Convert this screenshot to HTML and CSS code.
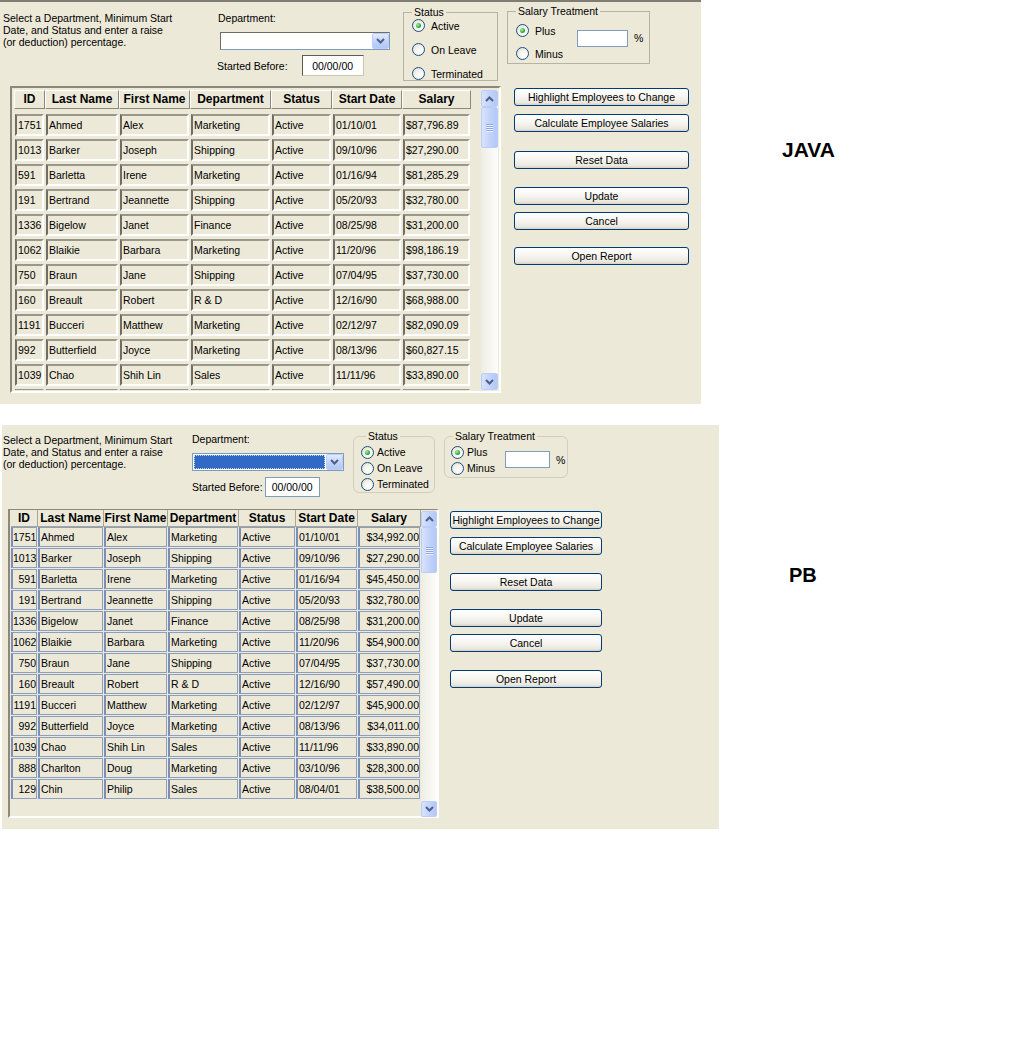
FILE: index.html
```html
<!DOCTYPE html>
<html>
<head>
<meta charset="utf-8">
<title>Employee Salaries</title>
<link rel="stylesheet" href="styles.css">
</head>
<body>
<div class="page">
  <div class="row java-row">
    <section class="panel jpanel">
      <div class="top">
        <p class="desc">Select a Department, Minimum Start<br>Date, and Status and enter a raise<br>(or deduction) percentage.</p>
        <div class="dept">
          <div class="lbl">Department:</div>
          <div class="combo"><div class="cfield"></div><div class="ddbtn"><svg width="9" height="6" viewBox="0 0 9 6"><path d="M1 1L4.5 4.5L8 1" fill="none" stroke="#4d6185" stroke-width="2"/></svg></div></div>
          <div class="started"><span>Started Before:</span><div class="tinput">00/00/00</div></div>
        </div>
        <fieldset class="grp status">
          <legend>Status</legend>
          <div class="opt"><span class="rb on"></span>Active</div>
          <div class="opt"><span class="rb"></span>On Leave</div>
          <div class="opt"><span class="rb"></span>Terminated</div>
        </fieldset>
        <fieldset class="grp salary">
          <legend>Salary Treatment</legend>
          <div class="sal">
            <div class="opts">
              <div class="opt"><span class="rb on"></span>Plus</div>
              <div class="opt"><span class="rb"></span>Minus</div>
            </div>
            <div class="pct"></div><span class="pctsign">%</span>
          </div>
        </fieldset>
      </div>
      <div class="bottom">
        <div class="tbl">
          <div class="data">
            <div class="thead">
              <div>ID</div><div>Last Name</div><div>First Name</div><div>Department</div><div>Status</div><div>Start Date</div><div>Salary</div>
            </div>
            <div class="tbody">
              <div>1751</div><div>Ahmed</div><div>Alex</div><div>Marketing</div><div>Active</div><div>01/10/01</div><div>$87,796.89</div>
              <div>1013</div><div>Barker</div><div>Joseph</div><div>Shipping</div><div>Active</div><div>09/10/96</div><div>$27,290.00</div>
              <div>591</div><div>Barletta</div><div>Irene</div><div>Marketing</div><div>Active</div><div>01/16/94</div><div>$81,285.29</div>
              <div>191</div><div>Bertrand</div><div>Jeannette</div><div>Shipping</div><div>Active</div><div>05/20/93</div><div>$32,780.00</div>
              <div>1336</div><div>Bigelow</div><div>Janet</div><div>Finance</div><div>Active</div><div>08/25/98</div><div>$31,200.00</div>
              <div>1062</div><div>Blaikie</div><div>Barbara</div><div>Marketing</div><div>Active</div><div>11/20/96</div><div>$98,186.19</div>
              <div>750</div><div>Braun</div><div>Jane</div><div>Shipping</div><div>Active</div><div>07/04/95</div><div>$37,730.00</div>
              <div>160</div><div>Breault</div><div>Robert</div><div>R &amp; D</div><div>Active</div><div>12/16/90</div><div>$68,988.00</div>
              <div>1191</div><div>Bucceri</div><div>Matthew</div><div>Marketing</div><div>Active</div><div>02/12/97</div><div>$82,090.09</div>
              <div>992</div><div>Butterfield</div><div>Joyce</div><div>Marketing</div><div>Active</div><div>08/13/96</div><div>$60,827.15</div>
              <div>1039</div><div>Chao</div><div>Shih Lin</div><div>Sales</div><div>Active</div><div>11/11/96</div><div>$33,890.00</div>
              <div></div><div></div><div></div><div></div><div></div><div></div><div></div>
            </div>
          </div>
          <div class="sbar">
            <div class="sbtn"><svg width="9" height="6" viewBox="0 0 9 6"><path d="M1 5L4.5 1.5L8 5" fill="none" stroke="#4d6185" stroke-width="2"/></svg></div>
            <div class="thumb"><span></span><span></span><span></span><span></span></div>
            <div class="track"></div>
            <div class="sbtn"><svg width="9" height="6" viewBox="0 0 9 6"><path d="M1 1L4.5 4.5L8 1" fill="none" stroke="#4d6185" stroke-width="2"/></svg></div>
          </div>
        </div>
        <div class="btns">
          <button class="btn">Highlight Employees to Change</button>
          <button class="btn">Calculate Employee Salaries</button>
          <button class="btn g1">Reset Data</button>
          <button class="btn g2">Update</button>
          <button class="btn g4">Cancel</button>
          <button class="btn g3">Open Report</button>
        </div>
      </div>
    </section>
    <div class="tag">JAVA</div>
  </div>

  <div class="row pb-row">
    <section class="panel ppanel">
      <div class="top">
        <p class="desc">Select a Department, Minimum Start<br>Date, and Status and enter a raise<br>(or deduction) percentage.</p>
        <div class="dept">
          <div class="lbl">Department:</div>
          <div class="combo"><div class="cfield"><div class="sel"></div></div><div class="ddbtn"><svg width="9" height="6" viewBox="0 0 9 6"><path d="M1 1L4.5 4.5L8 1" fill="none" stroke="#4d6185" stroke-width="2"/></svg></div></div>
          <div class="started"><span>Started Before:</span><div class="tinput">00/00/00</div></div>
        </div>
        <fieldset class="grp status">
          <legend>Status</legend>
          <div class="opt"><span class="rb on"></span>Active</div>
          <div class="opt"><span class="rb"></span>On Leave</div>
          <div class="opt"><span class="rb"></span>Terminated</div>
        </fieldset>
        <fieldset class="grp salary">
          <legend>Salary Treatment</legend>
          <div class="sal">
            <div class="opts">
              <div class="opt"><span class="rb on"></span>Plus</div>
              <div class="opt"><span class="rb"></span>Minus</div>
            </div>
            <div class="pct"></div><span class="pctsign">%</span>
          </div>
        </fieldset>
      </div>
      <div class="bottom">
        <div class="tbl">
          <div class="data">
            <div class="thead">
              <div>ID</div><div>Last Name</div><div>First Name</div><div>Department</div><div>Status</div><div>Start Date</div><div>Salary</div>
            </div>
            <div class="tbody">
              <div class="r">1751</div><div>Ahmed</div><div>Alex</div><div>Marketing</div><div>Active</div><div>01/10/01</div><div class="r">$34,992.00</div>
              <div class="r">1013</div><div>Barker</div><div>Joseph</div><div>Shipping</div><div>Active</div><div>09/10/96</div><div class="r">$27,290.00</div>
              <div class="r">591</div><div>Barletta</div><div>Irene</div><div>Marketing</div><div>Active</div><div>01/16/94</div><div class="r">$45,450.00</div>
              <div class="r">191</div><div>Bertrand</div><div>Jeannette</div><div>Shipping</div><div>Active</div><div>05/20/93</div><div class="r">$32,780.00</div>
              <div class="r">1336</div><div>Bigelow</div><div>Janet</div><div>Finance</div><div>Active</div><div>08/25/98</div><div class="r">$31,200.00</div>
              <div class="r">1062</div><div>Blaikie</div><div>Barbara</div><div>Marketing</div><div>Active</div><div>11/20/96</div><div class="r">$54,900.00</div>
              <div class="r">750</div><div>Braun</div><div>Jane</div><div>Shipping</div><div>Active</div><div>07/04/95</div><div class="r">$37,730.00</div>
              <div class="r">160</div><div>Breault</div><div>Robert</div><div>R &amp; D</div><div>Active</div><div>12/16/90</div><div class="r">$57,490.00</div>
              <div class="r">1191</div><div>Bucceri</div><div>Matthew</div><div>Marketing</div><div>Active</div><div>02/12/97</div><div class="r">$45,900.00</div>
              <div class="r">992</div><div>Butterfield</div><div>Joyce</div><div>Marketing</div><div>Active</div><div>08/13/96</div><div class="r">$34,011.00</div>
              <div class="r">1039</div><div>Chao</div><div>Shih Lin</div><div>Sales</div><div>Active</div><div>11/11/96</div><div class="r">$33,890.00</div>
              <div class="r">888</div><div>Charlton</div><div>Doug</div><div>Marketing</div><div>Active</div><div>03/10/96</div><div class="r">$28,300.00</div>
              <div class="r">129</div><div>Chin</div><div>Philip</div><div>Sales</div><div>Active</div><div>08/04/01</div><div class="r">$38,500.00</div>
            </div>
          </div>
          <div class="sbar">
            <div class="sbtn"><svg width="9" height="6" viewBox="0 0 9 6"><path d="M1 5L4.5 1.5L8 5" fill="none" stroke="#4d6185" stroke-width="2"/></svg></div>
            <div class="thumb"><span></span><span></span><span></span><span></span></div>
            <div class="track"></div>
            <div class="sbtn"><svg width="9" height="6" viewBox="0 0 9 6"><path d="M1 1L4.5 4.5L8 1" fill="none" stroke="#4d6185" stroke-width="2"/></svg></div>
          </div>
        </div>
        <div class="btns">
          <button class="btn">Highlight Employees to Change</button>
          <button class="btn">Calculate Employee Salaries</button>
          <button class="btn g2">Reset Data</button>
          <button class="btn g2">Update</button>
          <button class="btn g4">Cancel</button>
          <button class="btn g2">Open Report</button>
        </div>
      </div>
    </section>
    <div class="tag">PB</div>
  </div>
</div>
</body>
</html>
```

FILE: styles.css
```css
* { box-sizing: border-box; }

body {
  margin: 0;
  background: #ffffff;
  font-family: "Liberation Sans", Arial, sans-serif;
  font-size: 10.5px;
  color: #000;
}

.page { display: flex; flex-direction: column; gap: 21px; }
.row { display: flex; align-items: flex-start; }

.panel {
  background: #ece9d8;
  height: 404px;
  display: flex;
  flex-direction: column;
}
.jpanel { width: 701px; border-top: 2px solid #7f7d72; }
.ppanel { width: 717px; margin-left: 2px; }

.tag { font-weight: bold; font-size: 20px; line-height: 20px; }
.java-row .tag { font-size: 21px; margin: 140px 0 0 81px; }
.pb-row .tag { margin: 140px 0 0 70px; }

/* ---------- top form area ---------- */
.top { height: 84px; display: flex; align-items: flex-start; }

.desc { margin: 0; font-size: 10.5px; line-height: 12px; }
.jpanel .desc { margin: 10px 0 0 3px; width: 214px; }
.ppanel .desc { margin: 9px 0 0 1px; width: 188px; }

.dept { display: flex; flex-direction: column; align-items: flex-start; }
.jpanel .dept { width: 186px; margin-top: 10px; }
.ppanel .dept { width: 162px; margin-top: 8px; }
.lbl { line-height: 13px; padding-left: 1px; }

.combo { display: flex; height: 18px; background: #fff; }
.jpanel .combo {
  width: 170px; margin: 7px 0 0 3px;
  border: 1px solid #7f9db9; border-top-color: #6f6d62; border-left-color: #6f6d62;
}
.ppanel .combo { width: 152px; margin: 7px 0 0 1px; border: 1px solid #7f9db9; }
.cfield { flex: 1; padding: 1px; }
.sel { height: 100%; background: #316ac5; outline: 1px dotted #c8d4ee; outline-offset: -1px; }
.ddbtn {
  width: 17px; height: 16px;
  border: 1px solid #bccdf8; border-radius: 2px;
  background: linear-gradient(#e3ebfd, #c0d1f9 60%, #b1c7f6);
  display: flex; align-items: center; justify-content: center;
}

.started { display: flex; align-items: center; }
.jpanel .started { margin-top: 5px; }
.ppanel .started { margin-top: 6px; padding-left: 1px; }
.tinput {
  background: #fff; border: 1px solid #7f9db9;
  display: flex; align-items: center; justify-content: center;
}
.jpanel .tinput { width: 62px; height: 21px; margin-left: 14px; border-color: #5d5b52 #c9c6b8 #c9c6b8 #5d5b52; }
.ppanel .tinput { width: 55px; height: 20px; margin-left: 2px; }

/* group boxes */
fieldset.grp { margin: 0; padding: 0; min-width: 0; border: 1px solid #c5c2b2; }
fieldset.grp legend { padding: 0 2px; line-height: 13px; }
.opt { display: flex; align-items: center; height: 13px; }
.rb {
  width: 13px; height: 13px; border-radius: 50%;
  border: 1px solid #1c5180;
  background: radial-gradient(circle at 65% 65%, #ffffff 0, #f4f3ee 45%, #d9d6ca 100%);
  position: relative; flex: none;
}
.rb.on::after {
  content: ""; position: absolute; left: 3px; top: 3px;
  width: 5px; height: 5px; border-radius: 50%;
  background: radial-gradient(circle at 35% 35%, #a4f0a4, #21a121 70%);
}

.jpanel .status { width: 95px; margin-top: 4px; padding: 0 0 0 8px; border-color: #b6b3a5; }
.jpanel .status .opt { gap: 6px; margin-bottom: 11px; }
.jpanel .status .opt:last-child { margin-bottom: 0; }
.jpanel .salary { width: 143px; margin: 3px 0 0 9px; padding: 6px 0 3px 8px; border-color: #b6b3a5; }
.jpanel .salary .opts { width: 61px; }
.jpanel .salary .opt { gap: 6px; }
.jpanel .salary .opt + .opt { margin-top: 10px; }
.sal { display: flex; align-items: flex-start; }
.pct { background: #fff; border: 1px solid #7f9db9; }
.jpanel .pct { width: 51px; height: 17px; margin-top: 6px; }
.pctsign { margin-left: 6px; }
.jpanel .pctsign { margin-top: 8px; }

.ppanel .grp { border-color: #d0d0bf; border-radius: 6px; }
.ppanel .status { width: 82px; margin: 5px 0 0 0; padding: 1px 0 0 7px; }
.ppanel .status legend { margin-left: 5px; }
.ppanel .opt { height: 16px; gap: 3px; }
.ppanel .salary { width: 124px; margin: 5px 0 0 9px; padding: 1px 0 1px 6px; }
.ppanel .salary legend { margin-left: 2px; }
.ppanel .salary .opts { width: 54px; }
.ppanel .pct { width: 45px; height: 17px; margin-top: 7px; }
.ppanel .pctsign { margin-top: 10px; }

/* ---------- bottom area ---------- */
.bottom { display: flex; align-items: flex-start; }

.tbl { display: flex; background: #ece9d8; }
.jpanel .tbl {
  width: 491px; height: 307px; margin-left: 10px;
  border: 2px solid; border-color: #8c897c #ffffff #ffffff #8c897c;
  padding: 2px 1px 1px 2px;
}
.ppanel .tbl {
  width: 431px; height: 309px; margin-left: 6px;
  border: 2px solid; border-color: #8c897c #ffffff #ffffff #8c897c;
  border-top-width: 1px;
  padding: 0 0 0 1px;
}

.data { display: flex; flex-direction: column; }
.thead, .tbody { display: grid; }
.jpanel .data { width: 466px; }
.jpanel .thead, .jpanel .tbody { grid-template-columns: 31px 74px 71px 81px 61px 70px 69px; }
.ppanel .data { width: 411px; }
.ppanel .thead, .ppanel .tbody { grid-template-columns: 27px 66px 64px 71px 57px 62px 63px; }

.thead > div {
  font-weight: bold; font-size: 12px; text-align: center;
  white-space: nowrap; overflow: hidden;
}
.jpanel .thead > div {
  height: 19px; line-height: 17px;
  border: 1px solid; border-color: #ffffff #8c897c #8c897c #ffffff;
}
.ppanel .thead > div {
  height: 17px; line-height: 16px;
  border-right: 1px solid #a8a595; border-bottom: 1px solid #a8a595;
}

.tbody { overflow: hidden; }
.jpanel .tbody { height: 281px; grid-auto-rows: 25px; padding-top: 5px; }
.jpanel .tbody > div {
  margin: 0 1px 3px 1px;
  border: 2px solid; border-color: #99968a #ffffff #ffffff #706e64;
  line-height: 18px; padding-left: 1px;
  white-space: nowrap; overflow: hidden;
}
.ppanel .tbody { height: 290px; grid-auto-rows: 21px; padding-top: 0; }
.ppanel .tbody > div {
  margin: 0 1px 1px 0;
  border: 1px solid #8d9fbe; border-left: 2px solid #7a8fb8;
  line-height: 18px; padding-left: 1px;
  white-space: nowrap; overflow: hidden;
}
.ppanel .tbody > div.r { text-align: right; padding: 0; }

/* scrollbar */
.sbar {
  display: flex; flex-direction: column;
  background: linear-gradient(to right, #eeede5, #fdfdfb);
}
.jpanel .sbar { width: 17px; height: 300px; margin-left: 9px; }
.ppanel .sbar { width: 16px; height: 306px; margin-left: 0; margin-top: 1px; }
.sbtn, .thumb {
  border: 1px solid #bccdf8; border-radius: 2px;
  background: linear-gradient(to right, #d8e3fd, #c3d3fb 50%, #b3c8f6);
  display: flex; align-items: center; justify-content: center; flex: none;
}
.jpanel .sbtn { height: 17px; }
.ppanel .sbtn { height: 16px; }
.thumb { flex-direction: column; gap: 1px; }
.jpanel .thumb { height: 41px; }
.ppanel .thumb { height: 46px; }
.thumb span { width: 7px; height: 1px; background: #8aa6e6; box-shadow: 0 1px 0 #eef3fe; }
.track { flex: 1; }

/* buttons */
.btns { display: flex; flex-direction: column; }
.jpanel .btns { width: 175px; margin: 2px 0 0 13px; }
.ppanel .btns { width: 152px; margin: 2px 0 0 11px; }
.btn {
  height: 18px; padding: 0; margin: 0 0 8px 0;
  font-family: "Liberation Sans", Arial, sans-serif; font-size: 10.5px; color: #000;
  border: 1px solid #003c74; border-radius: 3px;
  background: linear-gradient(#ffffff 0%, #f7f6f2 45%, #ebe8df 85%, #d6d0c5 100%);
  white-space: nowrap;
}
.btn.g1 { margin-top: 11px; }
.btn.g2 { margin-top: 10px; }
.btn.g3 { margin-top: 9px; }
.btn.g4 { margin-top: -1px; }
```
